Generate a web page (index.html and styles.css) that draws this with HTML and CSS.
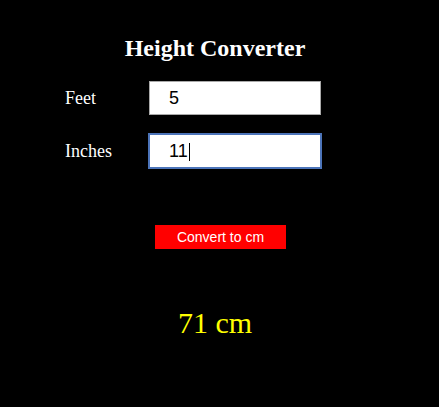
FILE: index.html
```html
<!DOCTYPE html>
<html>
<head>
<meta charset="utf-8">
<title>Height Converter</title>
<link rel="stylesheet" href="styles.css">
</head>
<body>
<div class="app">
  <h2 class="title">Height Converter</h2>
  <div class="row">
    <label class="label" for="feet">Feet</label>
    <input class="field" id="feet" type="text" value="5">
  </div>
  <div class="row row-second">
    <label class="label" for="inches">Inches</label>
    <span class="field-wrap">
      <input class="field field-focus" id="inches" type="text" value="11">
      <span class="caret"></span>
    </span>
  </div>
  <div class="actions">
    <button class="convert" type="button">Convert to cm</button>
  </div>
  <div class="result">71 cm</div>
</div>
</body>
</html>
```

FILE: styles.css
```css
html, body {
  margin: 0;
  padding: 0;
  background: #000;
}
body {
  width: 439px;
  height: 407px;
  overflow: hidden;
  font-family: "Liberation Serif", "Times New Roman", serif;
}
.app {
  width: 430px;
  padding-top: 34px;
  display: flex;
  flex-direction: column;
}
.title {
  margin: 0;
  font-size: 24px;
  font-weight: bold;
  line-height: 28px;
  color: #fff;
  text-align: center;
}
.row {
  display: flex;
  align-items: center;
  padding-left: 65px;
  margin-top: 19px;
}
.row-second {
  margin-top: 19px;
}
.label {
  width: 84px;
  font-size: 18px;
  color: #fff;
  line-height: 20px;
}
.field-wrap {
  position: relative;
  display: block;
  width: 172px;
  height: 34px;
}
.field {
  box-sizing: border-box;
  width: 172px;
  height: 34px;
  margin: 0;
  padding: 0 0 0 19px;
  border: 1px solid #a9a9a9;
  background: #fff;
  color: #000;
  font-family: "Liberation Sans", Arial, sans-serif;
  font-size: 18px;
  outline: none;
  display: block;
}
.field-focus {
  border-color: #4c74b9;
  outline: 1px solid #4c74b9;
}
.caret {
  position: absolute;
  left: 40px;
  top: 9px;
  width: 1px;
  height: 18px;
  background: #000;
}
.actions {
  display: flex;
  justify-content: center;
  margin-top: 57px;
}
.convert {
  box-sizing: border-box;
  width: 131px;
  height: 24px;
  margin: 0 0 0 11px;
  padding: 0;
  border: none;
  background: #ff0000;
  color: #fff;
  font-family: "Liberation Sans", Arial, sans-serif;
  font-size: 14px;
  line-height: 24px;
}
.result {
  margin-top: 57px;
  font-size: 30px;
  line-height: 34px;
  color: #ffff00;
  text-align: center;
}
```
